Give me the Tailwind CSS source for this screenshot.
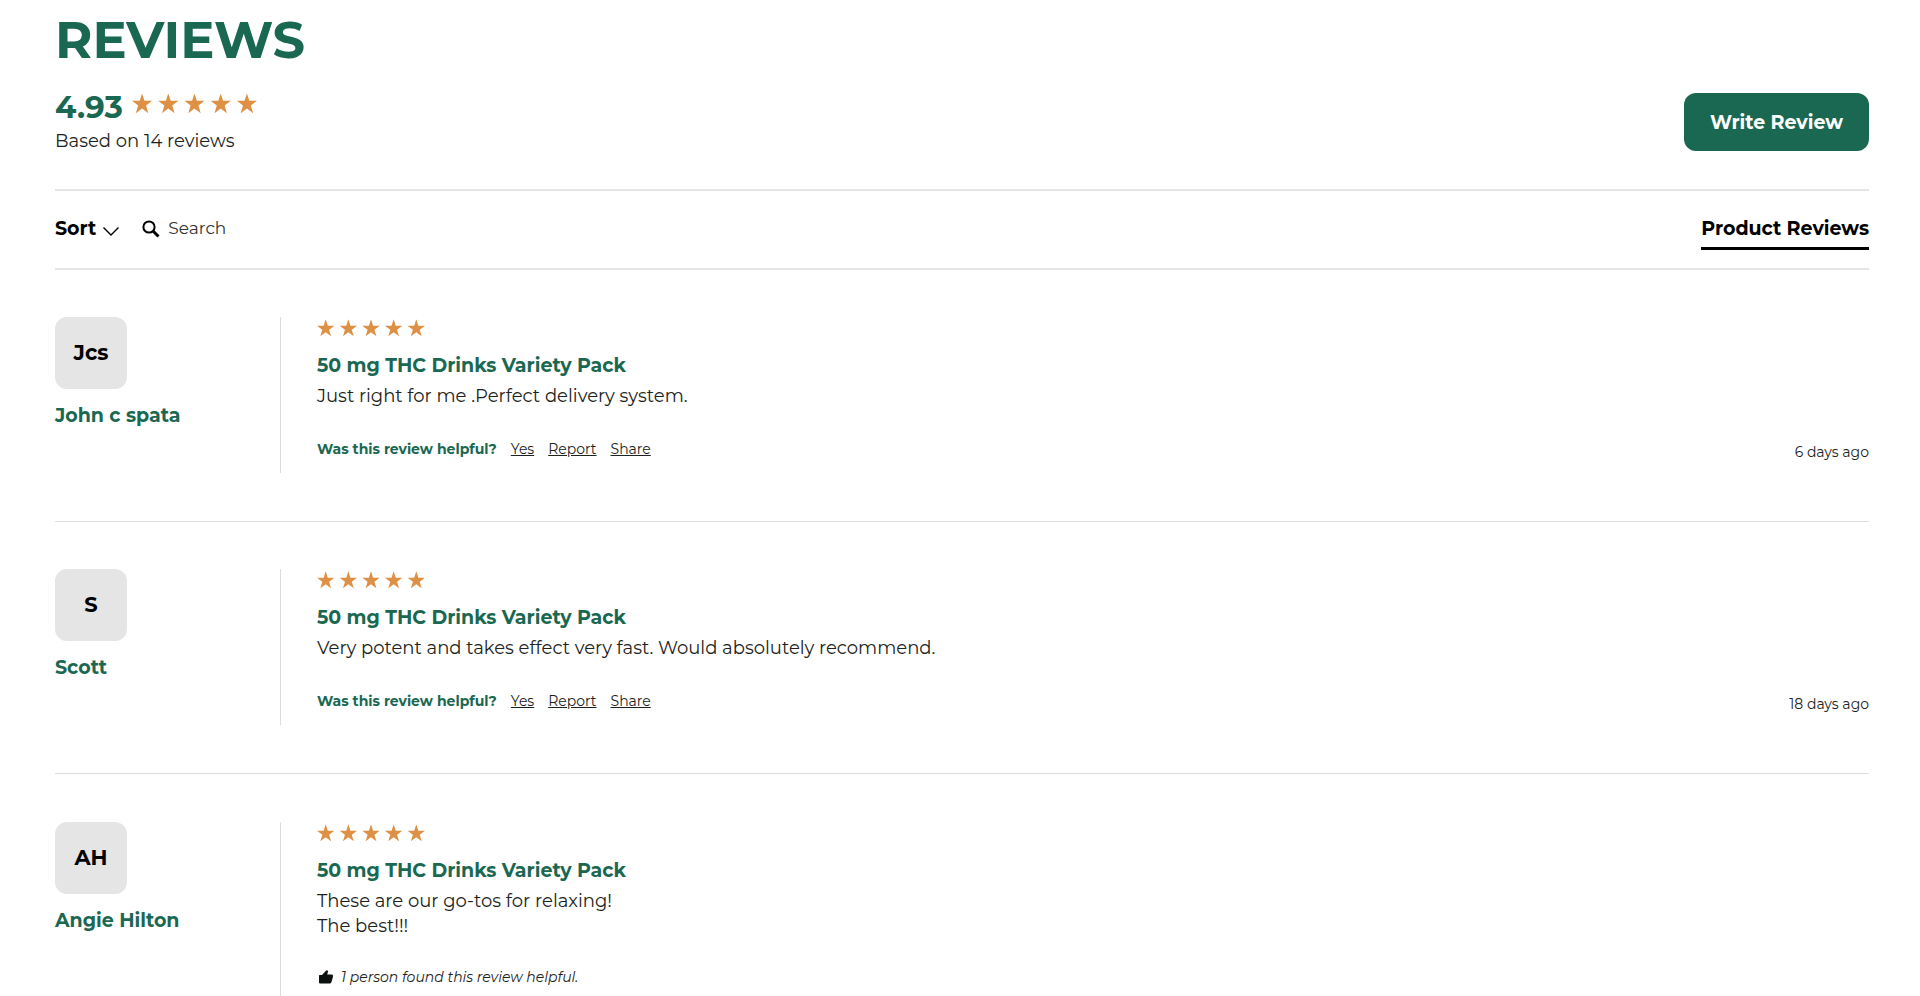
<!DOCTYPE html>
<html lang="en">
<head>
    <meta charset="UTF-8">
    <meta name="viewport" content="width=device-width, initial-scale=1.0">
    <title>Reviews</title>
    <script src="https://cdn.jsdelivr.net/npm/@tailwindcss/browser@4"></script>
</head>
<body class="bg-white font-[Montserrat,Inter,sans-serif] text-[#1c2321] overflow-x-hidden">
    <!-- Shared icons -->
    <svg class="hidden">
        <symbol id="star" viewBox="0 0 20 20">
            <path d="M10 0l2.4 7.3H20l-6.1 4.7 2.3 7.6L10 15l-6.2 4.6L6.1 12 0 7.3h7.6z"/>
        </symbol>
        <symbol id="stars" viewBox="0 0 124 20">
            <use href="#star" x="0" width="20" height="20"/>
            <use href="#star" x="26" width="20" height="20"/>
            <use href="#star" x="52" width="20" height="20"/>
            <use href="#star" x="78" width="20" height="20"/>
            <use href="#star" x="104" width="20" height="20"/>
        </symbol>
    </svg>

    <main class="pl-[55px] pr-[51px] h-screen overflow-hidden">
        <h1 class="pt-2 text-[51px] leading-[64px] font-bold text-[#1a6852]">REVIEWS</h1>

        <!-- Summary -->
        <section class="flex justify-between items-start pt-[21px] pb-9 border-b-2 border-[#e5e5e5]">
            <div>
                <div class="flex items-start gap-[9px]">
                    <span class="text-[31px] leading-[28px] font-bold text-[#1a6852]">4.93</span>
                    <svg class="w-[125px] h-[21px] fill-[#de9045]" role="img" aria-label="4.93 out of 5 stars"><use href="#stars"/></svg>
                </div>
                <p class="pt-2 text-[18px] leading-[24px]">Based on 14 reviews</p>
            </div>
            <button class="w-[185px] h-[58px] pt-[2px] rounded-xl bg-[#1a6852] text-white text-[19px] font-bold cursor-pointer">Write Review</button>
        </section>

        <!-- Toolbar -->
        <nav class="flex justify-between items-start h-[79px] pt-[26px] border-b-2 border-[#e5e5e5]">
            <div class="flex items-center h-6">
                <button class="flex items-center gap-[7px] text-[19px] font-bold text-black cursor-pointer">
                    Sort
                    <svg class="w-4 h-[9px] mt-1 fill-none stroke-black" viewBox="0 0 16 9" stroke-width="1.4"><path d="M.5.5L8 8 15.5.5"/></svg>
                </button>
                <label for="search" class="ml-[23px]" aria-label="Search">
                    <svg class="w-[18px] h-[18px] fill-none stroke-black" viewBox="0 0 18 18"><circle cx="7" cy="7" r="5.6" stroke-width="2"/><path d="M11 11l5.5 5.5" stroke-width="3"/></svg>
                </label>
                <input id="search" type="text" placeholder="Search" class="ml-2 w-40 text-[17px] placeholder:text-[#333333] outline-none">
            </div>
            <a href="#" class="h-[33px] border-b-3 border-black text-[19px] leading-[24px] font-bold text-black">Product Reviews</a>
        </nav>

        <!-- Review list -->
        <article class="flex pt-[47px] pb-12 border-b border-[#dcdcdc]">
            <div class="w-[225px] shrink-0">
                <div class="flex items-center justify-center size-[72px] rounded-xl bg-[#e5e5e5] text-[21px] font-bold text-black">Jcs</div>
                <h2 class="pt-[15px] text-[19px] leading-[24px] font-bold text-[#1a6852]">John c spata</h2>
            </div>
            <div class="flex-1 flex justify-between items-end min-h-[156px] pl-9 border-l border-[#dcdcdc]">
                <div class="self-start">
                    <svg class="w-[108px] h-[18px] mt-[2px] fill-[#de9045]" role="img" aria-label="5 out of 5 stars"><use href="#stars"/></svg>
                    <h3 class="pt-[17px] text-[19px] leading-[24px] font-bold text-[#1a6852]">50 mg THC Drinks Variety Pack</h3>
                    <p class="pt-[6px] text-[18px] leading-[25px]">Just right for me .Perfect delivery system.</p>
                    <div class="flex gap-[14px] pt-[30px] text-[14px] leading-[20px]">
                        <span class="font-bold text-[#1a6852]">Was this review helpful?</span>
                        <a href="#" class="underline">Yes</a>
                        <a href="#" class="underline">Report</a>
                        <a href="#" class="underline">Share</a>
                    </div>
                </div>
                <time class="pb-[11px] text-[14px] leading-[20px]">6 days ago</time>
            </div>
        </article>

        <article class="flex pt-[47px] pb-12 border-b border-[#dcdcdc]">
            <div class="w-[225px] shrink-0">
                <div class="flex items-center justify-center size-[72px] rounded-xl bg-[#e5e5e5] text-[21px] font-bold text-black">S</div>
                <h2 class="pt-[15px] text-[19px] leading-[24px] font-bold text-[#1a6852]">Scott</h2>
            </div>
            <div class="flex-1 flex justify-between items-end min-h-[156px] pl-9 border-l border-[#dcdcdc]">
                <div class="self-start">
                    <svg class="w-[108px] h-[18px] mt-[2px] fill-[#de9045]" role="img" aria-label="5 out of 5 stars"><use href="#stars"/></svg>
                    <h3 class="pt-[17px] text-[19px] leading-[24px] font-bold text-[#1a6852]">50 mg THC Drinks Variety Pack</h3>
                    <p class="pt-[6px] text-[18px] leading-[25px]">Very potent and takes effect very fast. Would absolutely recommend.</p>
                    <div class="flex gap-[14px] pt-[30px] text-[14px] leading-[20px]">
                        <span class="font-bold text-[#1a6852]">Was this review helpful?</span>
                        <a href="#" class="underline">Yes</a>
                        <a href="#" class="underline">Report</a>
                        <a href="#" class="underline">Share</a>
                    </div>
                </div>
                <time class="pb-[11px] text-[14px] leading-[20px]">18 days ago</time>
            </div>
        </article>

        <article class="flex pt-12 pb-12 border-b border-[#dcdcdc]">
            <div class="w-[225px] shrink-0">
                <div class="flex items-center justify-center size-[72px] rounded-xl bg-[#e5e5e5] text-[21px] font-bold text-black">AH</div>
                <h2 class="pt-[15px] text-[19px] leading-[24px] font-bold text-[#1a6852]">Angie Hilton</h2>
            </div>
            <div class="flex-1 min-h-[220px] pl-9 border-l border-[#dcdcdc]">
                <svg class="w-[108px] h-[18px] mt-[2px] fill-[#de9045]" role="img" aria-label="5 out of 5 stars"><use href="#stars"/></svg>
                <h3 class="pt-[17px] text-[19px] leading-[24px] font-bold text-[#1a6852]">50 mg THC Drinks Variety Pack</h3>
                <p class="pt-[6px] text-[18px] leading-[25px]">These are our go-tos for relaxing!<br>The best!!!</p>
                <p class="flex items-center gap-2 pt-7 pl-[2px] text-[14px] leading-[20px] italic">
                    <svg class="w-[14px] h-[14px] fill-[#0c1210]" viewBox="0 0 14 14"><path d="M0 5.5Q0 5 .6 5H3L7.2.6Q7.8-.2 8.6.4 9.2 1 8.9 2L8.2 4.6h4.6q1.2 0 1.2 1.3 0 .8-.2 1.6l-1.3 4.6Q12 13.6 10.6 13.6H1Q0 13.6 0 12.6z"/></svg>
                    1 person found this review helpful.
                </p>
            </div>
        </article>
    </main>
</body>
</html>
